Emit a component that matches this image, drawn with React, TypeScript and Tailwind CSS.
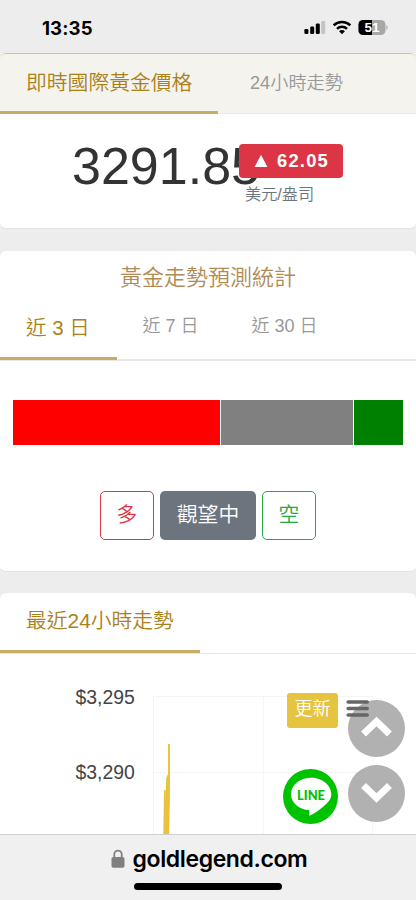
import React, { useState } from "react";
import clsx from "clsx";

const stats = [
  { id: "long", width: 206.75, className: "bg-[#ff0000]" },
  { id: "hold", width: 132, className: "bg-[#808080]" },
  { id: "short", width: 49.5, className: "bg-[#008000]" },
];

const ranges = [
  { days: 3, className: "w-[116.5px] pl-[26px]" },
  { days: 7, className: "w-[109px] pl-[26px]" },
  { days: 30, className: "w-[120px] pl-[26px]" },
];

function StatusBar() {
  return (
    <header className="flex h-[53px] shrink-0 items-start justify-between bg-[#ededed] pl-[42px] pr-[28px] pt-[18px]">
      <span className="font-['Inter'] text-[18.6px] font-bold leading-5 tracking-[0.1px] text-black">13:35</span>
      <svg width="84" height="20" viewBox="0 0 84 20" className="mt-[-1px]">
        <rect x="0.4" y="12" width="4" height="5" rx="1.2" />
        <rect x="6.2" y="9.6" width="4" height="7.4" rx="1.2" />
        <rect x="11.8" y="6.6" width="4" height="10.4" rx="1.2" />
        <rect x="17.2" y="4" width="4" height="13" rx="1.2" fill="#c4c4c4" />
        <g fill="none" stroke="#000" strokeWidth="2.5">
          <path d="M29.7 8.4c4.6-4.5 12-4.5 16.6 0" />
          <path d="M33 11.8c2.8-2.7 7.2-2.7 10 0" />
        </g>
        <path d="M38 17.2l-2.9-3c1.6-1.5 4.2-1.5 5.8 0z" />
        <rect x="54.5" y="3" width="27" height="15" rx="4.6" fill="#a8a8a8" />
        <path d="M59.1 3H68v15h-8.9a4.6 4.6 0 0 1-4.6-4.6V7.6A4.6 4.6 0 0 1 59.1 3z" />
        <path d="M82.4 8.2c1.6.8 1.6 3.8 0 4.6z" fill="#a8a8a8" />
        <text x="68" y="15" textAnchor="middle" fill="#fff" fontFamily="Liberation Sans" fontSize="13.5" fontWeight="700">
          51
        </text>
      </svg>
    </header>
  );
}

function PriceCard() {
  return (
    <section className="flex h-[175.5px] shrink-0 flex-col overflow-hidden rounded-[6px] border-b border-[#e2e2e2] bg-white">
      <nav className="flex h-[60.5px] shrink-0 rounded-t-[6px] border-b border-t border-b-[#e9e8e4] border-t-[#e0c07a] bg-[#f5f3ee]">
        <button className="-mb-px w-[218px] border-b-[3px] border-[#c8ac63] pl-[26px] text-left text-[20.8px] text-[#ab8118]">
          即時國際黃金價格
        </button>
        <button className="pl-[32px] text-[18.2px] text-[#999999]">24小時走勢</button>
      </nav>
      <div className="flex pl-[72px] pt-[22px]">
        <div className="w-[167px] whitespace-nowrap text-[52px] leading-[60px] text-[#333333]">3291.85</div>
        <div className="relative pt-[8px]">
          <div className="flex h-[34px] w-[104px] items-center rounded-[4px] bg-[#dc3545] pl-[15px] text-white">
            <svg width="14" height="14" viewBox="0 0 14 14" fill="currentColor">
              <path d="M7 .8L13.4 13H.6z" />
            </svg>
            <span className="ml-[9px] text-[18.4px] font-bold tracking-[1.2px]">62.05</span>
          </div>
          <div className="mt-[4px] pl-[6px] text-[16.2px] leading-6 text-[#6c757d]">美元/盎司</div>
        </div>
      </div>
    </section>
  );
}

function ForecastCard() {
  const [active, setActive] = useState(3);

  return (
    <section className="mt-[22.5px] h-[320.5px] shrink-0 rounded-[6px] border-b border-[#e2e2e2] bg-white">
      <h2 className="pt-[13px] text-center text-[22px] leading-[28px] text-[#b08b55]">黃金走勢預測統計</h2>
      <nav className="flex h-[68.5px] border-b-2 border-[#e8e8ea]">
        {ranges.map((r) => (
          <button
            key={r.days}
            onClick={() => setActive(r.days)}
            className={clsx(
              "-mb-px whitespace-nowrap border-b-[3px] text-left",
              r.className,
              active === r.days
                ? "border-[#c8ac63] pt-[8px] text-[20.5px] text-[#ab8118]"
                : "border-transparent pt-[5px] text-[18px] text-[#999999]"
            )}
          >
            近 {r.days} 日
          </button>
        ))}
      </nav>
      <div className="mx-[13px] mt-[39px] flex h-[45px] justify-between">
        {stats.map((s) => (
          <div key={s.id} className={s.className} style={{ width: s.width }} />
        ))}
      </div>
      <div className="mt-[46px] flex justify-center gap-[6px] text-[20.8px]">
        <button className="h-[49px] w-[54px] rounded-[5px] border border-[#dc3545] text-[#dc3545]">多</button>
        <button className="h-[49px] w-[96px] rounded-[5px] bg-[#6c757d] text-white">觀望中</button>
        <button className="h-[49px] w-[54px] rounded-[5px] border border-[#28a745] text-[#28a745]">空</button>
      </div>
    </section>
  );
}

function PriceChart() {
  return (
    <svg width="416" height="180" viewBox="0 0 416 180" className="block">
      <g stroke="#f5f5f5" strokeWidth="1">
        <path d="M154 42.5H372M154 118.5H372" />
        <path d="M153.5 42V180M263.5 42V180M372.5 42V180" />
      </g>
      <g fill="#444444" fontSize="19.4">
        <text x="75.5" y="49.5">$3,295</text>
        <text x="75.5" y="125">$3,290</text>
      </g>
      <path d="M163.3 180L164 136h1.7v12L166.2 124l1.8-4v-30h1.9v56l-.8 34z" fill="#e8c23c" />
    </svg>
  );
}

function ChartCard() {
  return (
    <section className="relative mt-[21.5px] min-h-0 flex-1 overflow-hidden rounded-t-[6px] bg-white">
      <nav className="flex h-[60.5px] border-b border-[#e4e4e6]">
        <button className="w-[200px] border-b-[3px] border-[#c8ac63] pb-[2px] pl-[26px] text-left text-[20.8px] text-[#ab8118]">
          最近24小時走勢
        </button>
      </nav>
      <PriceChart />

      {/* floating controls over the chart */}
      <button className="absolute left-[287px] top-[100px] h-[35px] w-[51px] rounded-[3px] bg-[#e6c43f] pb-[2px] text-[18px] text-white">
        更新
      </button>
      <div className="absolute left-[347.5px] top-[107px] flex flex-col gap-[8px]">
        <button className="size-[57px] rounded-full bg-[#b1b1b1]">
          <svg width="57" height="57" viewBox="0 0 57 57" fill="none" stroke="#fff" strokeWidth="7">
            <path d="M15.5 34L28.5 21.5L41.5 34" />
          </svg>
        </button>
        <button className="size-[57px] rounded-full bg-[#b1b1b1]">
          <svg width="57" height="57" viewBox="0 0 57 57" fill="none" stroke="#fff" strokeWidth="7">
            <path d="M15.5 20.5L28.5 33L41.5 20.5" />
          </svg>
        </button>
      </div>
      <svg
        width="24"
        height="20"
        viewBox="0 0 24 20"
        className="absolute left-[346px] top-[104.5px]"
        stroke="#666"
        strokeWidth="3.6"
        strokeLinecap="round"
      >
        <path d="M2.2 4H21.2M2.2 10.5H21.2M2.2 17H21.2" />
      </svg>
      <svg width="55" height="55" viewBox="0 0 55 55" className="absolute left-[283px] top-[176px]">
        <circle cx="27.5" cy="27.5" r="27.5" fill="#00c300" />
        <path
          d="M28 8.8C17 8.8 8 16.2 8 25.2c0 8.200 7.300 14.700 17 15.900 1.500.2 1.500 1.200 1.200 5.600 3.500-1.200 8.500-4.300 13.900-8.900 5-4.200 8.200-7.600 8.200-12.600C48.300 16.200 39 8.8 28 8.800z"
          fill="#fff"
        />
        <text
          x="14"
          y="30.8"
          textLength="28"
          lengthAdjust="spacingAndGlyphs"
          fill="#00c300"
          fontFamily="Lato"
          fontSize="14"
          fontWeight="900"
        >
          LINE
        </text>
      </svg>
    </section>
  );
}

function AddressBar() {
  return (
    <footer className="flex h-[66px] shrink-0 flex-col items-center border-t border-[#cfcfcf] bg-[#f0f0f0]">
      <div className="ml-[2px] mt-[10px] flex h-[28px] items-center">
        <svg width="14" height="19" viewBox="0 0 14 19" className="mb-[2px] mr-[8px]">
          <path d="M3.3 9V5.300a3.700 3.700 0 0 1 7.400 0V9" fill="none" stroke="#808080" strokeWidth="1.8" />
          <rect x="0.5" y="8" width="13" height="10.8" rx="1.8" fill="#808080" />
        </svg>
        <span className="font-['Inter'] text-[23px] font-semibold leading-7 tracking-[-0.38px] text-black">goldlegend.com</span>
      </div>
      <div className="mt-[10px] h-[6.5px] w-[148px] rounded-full bg-black" />
    </footer>
  );
}

export default function App() {
  return (
    <div className="flex h-[900px] w-[416px] flex-col overflow-hidden bg-[#ededed] font-['Liberation_Sans','Noto_Sans_CJK_TC',sans-serif] font-[350]">
      <StatusBar />
      <PriceCard />
      <ForecastCard />
      <ChartCard />
      <AddressBar />
    </div>
  );
}
